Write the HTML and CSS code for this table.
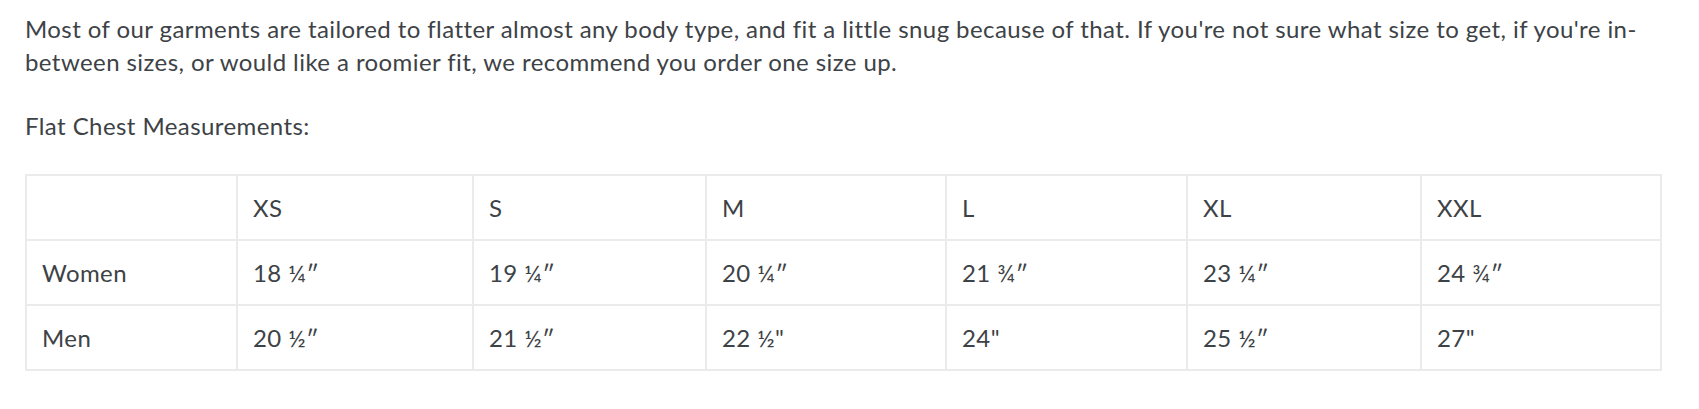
FILE: index.html
```html
<!DOCTYPE html>
<html lang="en">
<head>
<meta charset="utf-8">
<title>Size guide</title>
<link rel="stylesheet" href="styles.css">
</head>
<body>
<div class="rte">
  <p class="intro">Most of our garments are tailored to flatter almost any body type, and fit a little snug because of that. If you're not sure what size to get, if you're in-between sizes, or would like a roomier fit, we recommend you order one size up.</p>
  <p class="label">Flat Chest Measurements:</p>
  <table class="size-table">
    <colgroup>
      <col class="col-head">
      <col class="col-xs">
      <col class="col-s">
      <col class="col-m">
      <col class="col-l">
      <col class="col-xl">
      <col class="col-xxl">
    </colgroup>
    <tbody>
      <tr><td></td><td>XS</td><td>S</td><td>M</td><td>L</td><td>XL</td><td>XXL</td></tr>
      <tr><td>Women</td><td>18 ¼″</td><td>19 ¼″</td><td>20 ¼″</td><td>21 ¾″</td><td>23 ¼″</td><td>24 ¾″</td></tr>
      <tr><td>Men</td><td>20 ½″</td><td>21 ½″</td><td>22 ½"</td><td>24"</td><td>25 ½″</td><td>27"</td></tr>
    </tbody>
  </table>
</div>
</body>
</html>
```
FILE: styles.css
```css
html, body {
  margin: 0;
  padding: 0;
  background: #ffffff;
}

body {
  font-family: "Lato", "Liberation Sans", sans-serif;
  font-size: 24px;
  letter-spacing: 0.42px;
  color: #3d4246;
}

.rte {
  padding: 12px 39px 0 25px;
}

.intro {
  margin: 0 0 30px;
  line-height: 33.4px;
}

.label {
  margin: 0 0 32px;
  line-height: 33.4px;
}

.size-table {
  width: 100%;
  table-layout: fixed;
  border-collapse: separate;
  border-spacing: 0;
  border: 1px solid #ebebeb;
}

.size-table td {
  border: 1px solid #ebebeb;
  padding: 19px 15px;
  line-height: 25px;
  text-align: left;
  vertical-align: middle;
}

.col-head { width: 211px; }
.col-xs { width: 236px; }
.col-s { width: 233px; }
.col-m { width: 240px; }
.col-l { width: 241px; }
.col-xl { width: 234px; }
.col-xxl { width: 240px; }
```
